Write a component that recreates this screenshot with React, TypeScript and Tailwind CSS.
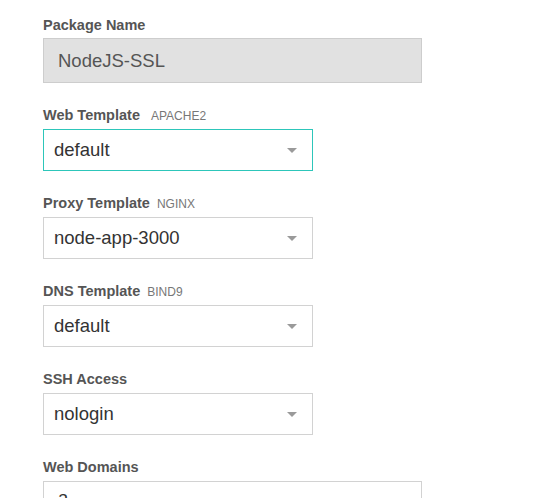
import React from 'react';

const font = { fontFamily: '"Liberation Sans", Arial, sans-serif' };

const Label: React.FC<{ text: string; tag?: string; tagGap?: string; mb?: string }> = ({ text, tag, tagGap = 'ml-[7px]', mb = 'mb-[5px]' }) => (
  <div className={`h-[20px] leading-[23px] flex items-baseline ${mb}`}>
    <span className="text-[14.5px] font-bold text-[#555]">{text}</span>
    {tag && <span className={`${tagGap} text-[12px] text-[#777] uppercase`}>{tag}</span>}
  </div>
);

const Caret: React.FC = () => (
  <svg width="10" height="5" viewBox="0 0 10 5" className="block">
    <path d="M0 0 L10 0 L5 5 Z" fill="#9a9a9a" />
  </svg>
);

const Select: React.FC<{ value: string; focused?: boolean }> = ({ value, focused }) => (
  <div
    className={`w-[270px] h-[42px] border flex items-center justify-between pl-[10px] pr-[15px] bg-white ${
      focused ? 'border-[#2dc6ba]' : 'border-[#d2d2d2]'
    }`}
  >
    <span className="text-[18.5px] text-[#333]">{value}</span>
    <Caret />
  </div>
);

export default function App() {
  return (
    <div className="min-h-screen bg-white pt-[14px] px-[43px]" style={font}>
      {/* Package name */}
      <Label text="Package Name" mb="mb-[4px]" />
      <div className="w-[379px] h-[45px] border border-[#cdcdcd] bg-[#e1e1e1] flex items-center pl-[14px] mb-[21px]">
        <span className="text-[18.5px] text-[#555]">NodeJS-SSL</span>
      </div>

      <Label text="Web Template" tag="Apache2" tagGap="ml-[11px]" />
      <div className="mb-[21px]">
        <Select value="default" focused />
      </div>

      <Label text="Proxy Template" tag="Nginx" />
      <div className="mb-[21px]">
        <Select value="node-app-3000" />
      </div>

      <Label text="DNS Template" tag="Bind9" />
      <div className="mb-[21px]">
        <Select value="default" />
      </div>

      <Label text="SSH Access" />
      <div className="mb-[21px]">
        <Select value="nologin" />
      </div>

      <Label text="Web Domains" />
      <div className="w-[379px] h-[90px] border border-[#d2d2d2] bg-white pl-[14px] pt-[5px]">
        <span className="text-[18.5px] text-[#333] leading-[21px]">a</span>
      </div>
    </div>
  );
}
